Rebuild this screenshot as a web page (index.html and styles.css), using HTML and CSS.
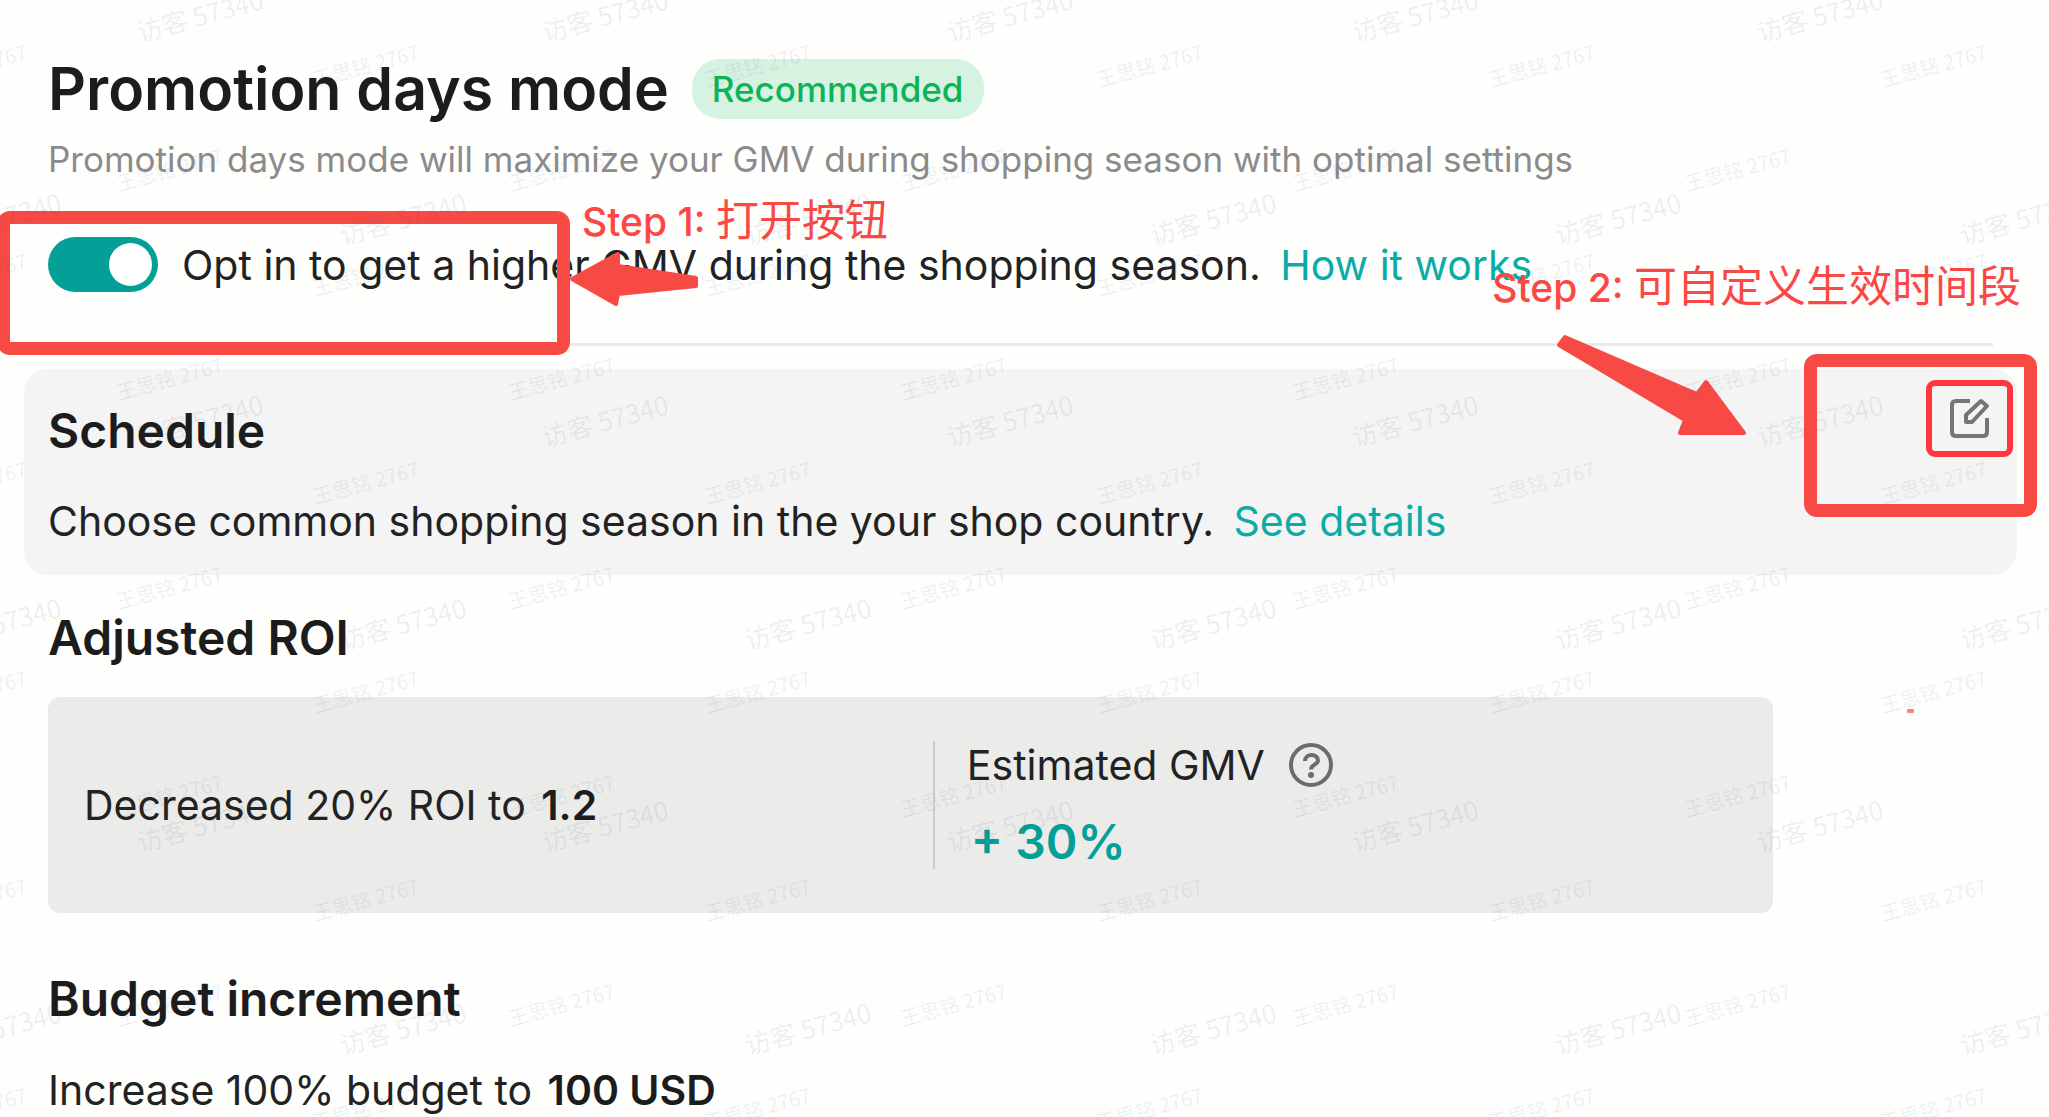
FILE: index.html
```html
<!DOCTYPE html>
<html lang="en">
<head>
<meta charset="utf-8">
<title>Promotion days mode</title>
<link rel="stylesheet" href="styles.css">
</head>
<body>
<main class="page">
  <header class="header">
    <div class="title-row">
      <h1 class="title">Promotion days mode</h1>
      <span class="badge">Recommended</span>
    </div>
    <p class="subtitle">Promotion days mode will maximize your GMV during shopping season with optimal settings</p>
  </header>

  <div class="opt-in">
    <input class="toggle" type="checkbox" role="switch" id="opt-in" checked>
    <p class="text"><label for="opt-in">Opt in to get a higher GMV during the shopping season.</label> <a class="link" href="#how">How it works</a></p>
  </div>

  <hr class="divider">

  <section class="card">
    <div>
      <h2 class="heading">Schedule</h2>
      <p class="text card-text">Choose common shopping season in the your shop country. <a class="link" href="#details">See details</a></p>
    </div>
    <button class="edit" type="button" aria-label="Edit schedule">
      <svg width="44" height="44" viewBox="0 0 44 44" fill="none" stroke="#757575" stroke-width="4" stroke-linejoin="round">
        <path d="M22 4H8Q4 4 4 8V35Q4 39 8 39H35Q39 39 39 35V21"/>
        <path d="M18 25V18L33 4L39 9L24 25Z"/>
      </svg>
    </button>
  </section>

  <section class="section">
    <h2 class="heading">Adjusted ROI</h2>
    <div class="panel">
      <p class="text">Decreased 20% ROI to <strong class="value">1.2</strong></p>
      <div class="estimate">
        <div class="estimate-label">
          <span>Estimated GMV</span>
          <svg width="46" height="46" viewBox="0 0 46 46" fill="none" stroke="#6c6c6c" stroke-width="4" role="img" aria-label="Help">
            <circle cx="23" cy="23" r="20"/>
            <path d="M17 19C17 11 30 11 30 18.500C30 23 23 22 23 27.500" stroke-width="4"/>
            <circle cx="23" cy="33" r="3" fill="#6c6c6c" stroke="none"/>
          </svg>
        </div>
        <div class="gain">+ 30%</div>
      </div>
    </div>
  </section>

  <section class="section budget">
    <h2 class="heading">Budget increment</h2>
    <p class="text budget-text">Increase 100% budget to <strong class="value">100 USD</strong></p>
  </section>

  <div class="frame frame-toggle"></div>
  <div class="frame frame-edit"></div>
  <p class="step step-one">Step 1: <span class="step-zh" lang="zh">打开按钮</span></p>
  <p class="step step-two">Step 2: <span class="step-zh" lang="zh">可自定义生效时间段</span></p>
  <svg class="arrow arrow-left" width="132" height="60" viewBox="0 0 132 60">
    <path d="M5 31L51 6V18L129 30V38L51 46L49 56Z"/>
  </svg>
  <svg class="arrow arrow-down" width="194" height="106" viewBox="0 0 194 106">
    <path d="M11 6L143 63L152 51L190 102H126L131 89L5 14Z"/>
  </svg>
  <span class="speck"></span>
  <div class="watermarks" aria-hidden="true"></div>
</main>
<script src="watermark.js"></script>
</body>
</html>
```
FILE: styles.css
```css
* { box-sizing: border-box; }

body {
  margin: 0;
  background: #fefefd;
  color: #222;
  font-family: Inter, "Noto Sans CJK SC", sans-serif;
}

h1, h2, p { margin: 0; }

.page {
  position: relative;
  padding: 53px 32px 0 48px;
  overflow: hidden;
}

.header { display: flex; flex-direction: column; gap: 10px; }
.title-row { display: flex; align-items: center; gap: 23px; }
.title { font-size: 59px; line-height: 72px; font-weight: 600; color: #1c1c1c; }
.badge {
  padding: 0 20px;
  border-radius: 28px;
  background: #d6f2e0;
  color: #0cb457;
  font-size: 35px;
  line-height: 60px;
  font-weight: 500;
}
.subtitle { font-size: 35px; line-height: 48px; color: #8b8b8b; }

.text { font-size: 41px; line-height: 54px; }
.link { margin-left: 8px; color: #0aaca5; text-decoration: none; }
.value { margin-left: 4px; font-weight: 600; color: #1c1c1c; }
.heading { font-size: 48px; line-height: 60px; font-weight: 600; color: #1c1c1c; }

.opt-in { display: flex; align-items: center; gap: 24px; margin-top: 54px; }
.toggle {
  appearance: none;
  flex: none;
  display: flex;
  align-items: center;
  justify-content: flex-end;
  width: 110px;
  height: 55px;
  margin: 0;
  padding: 6px;
  border-radius: 28px;
  background: #049f97;
}
.toggle::before {
  content: "";
  width: 43px;
  height: 43px;
  border-radius: 50%;
  background: #fff;
}

.divider {
  height: 3px;
  margin: 51px 24px 23px 0;
  border: 0;
  background: #eaeaea;
}

.card {
  display: flex;
  justify-content: space-between;
  align-items: flex-start;
  margin-left: -24px;
  padding: 11px 4px 27px 24px;
  border-radius: 24px;
  background: #f4f4f4;
}
.card .heading { margin-top: 21px; }
.card-text { margin-top: 33px; }
.edit {
  display: grid;
  place-items: center;
  flex: none;
  width: 87px;
  height: 77px;
  padding: 0;
  border: 6px solid #ff363b;
  border-radius: 9px;
  background: transparent;
}

.section { margin-top: 33px; }
.panel {
  display: grid;
  grid-template-columns: 51.3% 1fr;
  align-items: center;
  width: 87.6%;
  margin-top: 29px;
  padding: 44px 0;
  border-radius: 12px;
  background: #ebebea;
}
.panel > .text { padding-left: 36px; }
.estimate {
  display: flex;
  flex-direction: column;
  gap: 26px;
  padding-left: 32px;
  border-left: 2px solid #cbcdd0;
}
.estimate-label {
  display: flex;
  align-items: center;
  gap: 23px;
  font-size: 41px;
  line-height: 48px;
}
.gain { padding-left: 4px; font-size: 48px; line-height: 54px; font-weight: 600; color: #049f97; }
.budget { margin-top: 56px; }
.budget-text { margin-top: 34px; }

/* Tutorial annotations laid over the page */
.frame {
  position: absolute;
  border: 13px solid #f74a45;
  border-radius: 13px;
}
.frame-toggle { left: -3px; top: 211px; width: 573px; height: 144px; }
.frame-edit { right: 12px; top: 354px; width: 233px; height: 163px; }
.step {
  position: absolute;
  color: #fb4844;
  font-size: 39px;
  line-height: 52px;
  font-weight: 500;
  white-space: nowrap;
}
.step-zh { font-size: 43px; font-weight: 400; }
.step-one { left: 582px; top: 194px; }
.step-two { right: 28px; top: 260px; }
.arrow {
  position: absolute;
  fill: #f74a45;
  stroke: #f74a45;
  stroke-width: 4;
  stroke-linejoin: round;
}
.arrow-left { left: 567px; top: 248px; }
.arrow-down { right: 301px; top: 331px; }
.speck {
  position: absolute;
  right: 135px;
  top: 709px;
  width: 7px;
  height: 4px;
  border-radius: 1px;
  background: #ff817c;
}

.watermarks { position: absolute; inset: 0; overflow: hidden; pointer-events: none; }
.mark {
  position: absolute;
  transform: rotate(-15deg);
  transform-origin: 0 100%;
  color: rgba(70, 80, 110, 0.09);
  font-family: "Noto Sans CJK SC", sans-serif;
  font-size: 20px;
  line-height: 24px;
  white-space: nowrap;
}
.mark-guest { font-size: 26px; line-height: 32px; }
```
FILE: watermark.js
```js
// Tiles a label in staggered rows across the page.
const layer = document.querySelector('.watermarks');

function tile(text, className, x, y, stepX, stepY) {
  for (let row = 0; y + row * stepY < layer.clientHeight + 40; row++) {
    const start = row % 2 ? x - stepX / 2 : x;
    for (let left = start - stepX; left < layer.clientWidth; left += stepX) {
      const mark = document.createElement('span');
      mark.className = className;
      mark.textContent = text;
      mark.style.left = Math.round(left) + 'px';
      mark.style.top = Math.round(y + row * stepY) + 'px';
      layer.append(mark);
    }
  }
}

tile('王思铭 2767', 'mark', 316, 67, 392, 104.3);
tile('访客 57340', 'mark mark-guest', 141, 15, 405, 202.5);
```
